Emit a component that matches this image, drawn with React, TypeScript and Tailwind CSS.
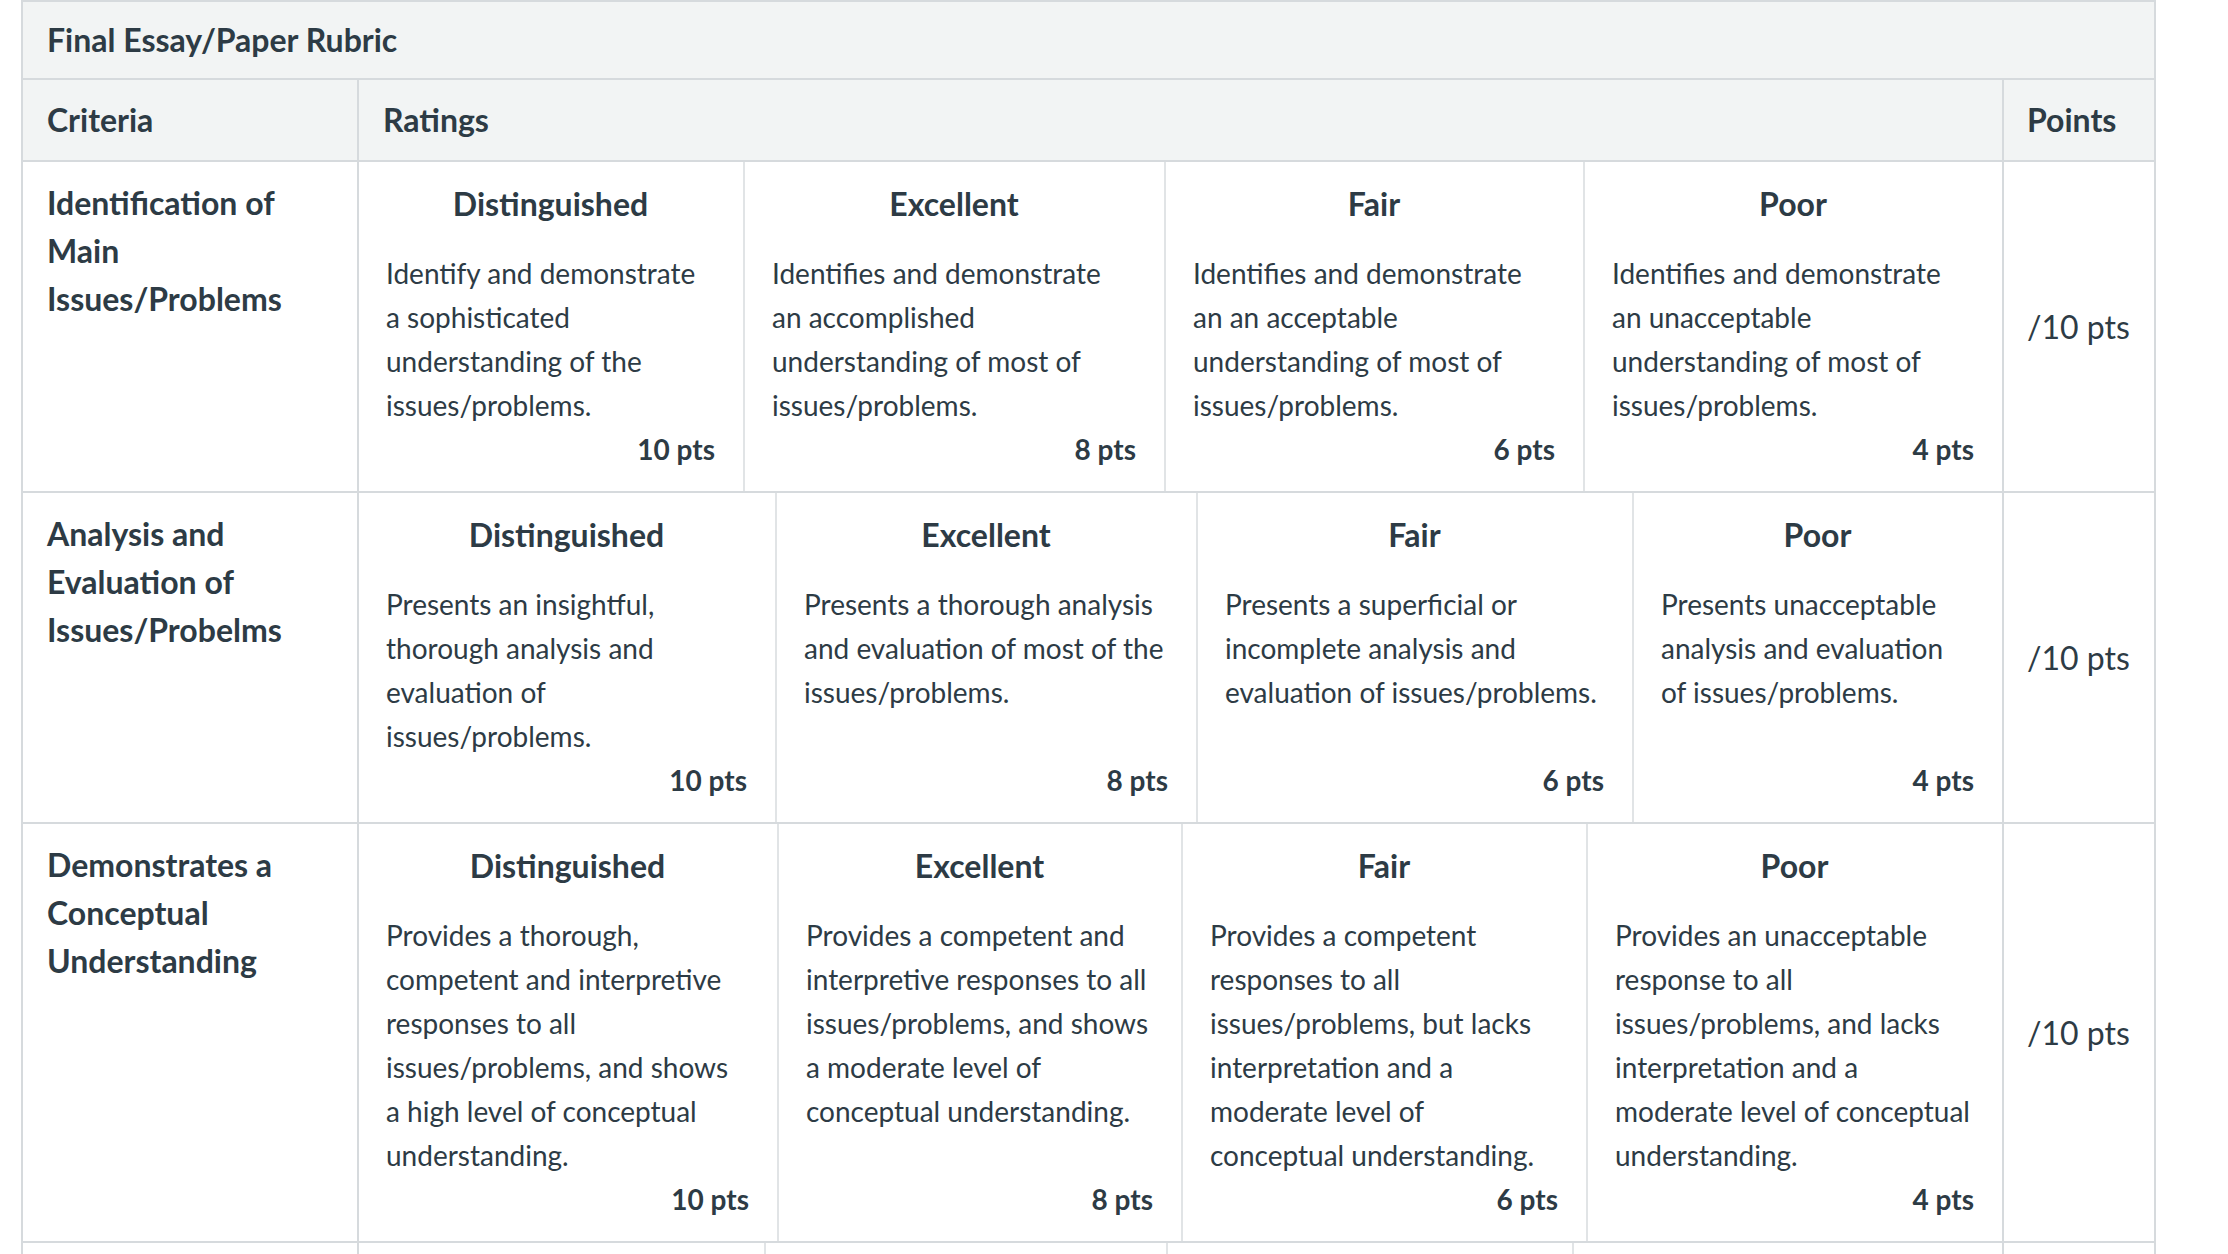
type Rating = {
  title: string;
  lines: string[];
  pts: number;
  width: string;
};

type Criterion = {
  name: string[];
  ratings: Rating[];
};

const criteria: Criterion[] = [
  {
    name: ["Identification of", "Main", "Issues/Problems"],
    ratings: [
      {
        title: "Distinguished",
        lines: ["Identify and demonstrate", "a sophisticated", "understanding of the", "issues/problems."],
        pts: 10,
        width: "w-[386px]",
      },
      {
        title: "Excellent",
        lines: ["Identifies and demonstrate", "an accomplished", "understanding of most of", "issues/problems."],
        pts: 8,
        width: "w-[421px]",
      },
      {
        title: "Fair",
        lines: ["Identifies and demonstrate", "an an acceptable", "understanding of most of", "issues/problems."],
        pts: 6,
        width: "w-[419px]",
      },
      {
        title: "Poor",
        lines: ["Identifies and demonstrate", "an unacceptable", "understanding of most of", "issues/problems."],
        pts: 4,
        width: "flex-1",
      },
    ],
  },
  {
    name: ["Analysis and", "Evaluation of", "Issues/Probelms"],
    ratings: [
      {
        title: "Distinguished",
        lines: ["Presents an insightful,", "thorough analysis and", "evaluation of", "issues/problems."],
        pts: 10,
        width: "w-[418px]",
      },
      {
        title: "Excellent",
        lines: ["Presents a thorough analysis", "and evaluation of most of the", "issues/problems."],
        pts: 8,
        width: "w-[421px]",
      },
      {
        title: "Fair",
        lines: ["Presents a superficial or", "incomplete analysis and", "evaluation of issues/problems."],
        pts: 6,
        width: "w-[436px]",
      },
      {
        title: "Poor",
        lines: ["Presents unacceptable", "analysis and evaluation", "of issues/problems."],
        pts: 4,
        width: "flex-1",
      },
    ],
  },
  {
    name: ["Demonstrates a", "Conceptual", "Understanding"],
    ratings: [
      {
        title: "Distinguished",
        lines: [
          "Provides a thorough,",
          "competent and interpretive",
          "responses to all",
          "issues/problems, and shows",
          "a high level of conceptual",
          "understanding.",
        ],
        pts: 10,
        width: "w-[420px]",
      },
      {
        title: "Excellent",
        lines: [
          "Provides a competent and",
          "interpretive responses to all",
          "issues/problems, and shows",
          "a moderate level of",
          "conceptual understanding.",
        ],
        pts: 8,
        width: "w-[404px]",
      },
      {
        title: "Fair",
        lines: [
          "Provides a competent",
          "responses to all",
          "issues/problems, but lacks",
          "interpretation and a",
          "moderate level of",
          "conceptual understanding.",
        ],
        pts: 6,
        width: "w-[405px]",
      },
      {
        title: "Poor",
        lines: [
          "Provides an unacceptable",
          "response to all",
          "issues/problems, and lacks",
          "interpretation and a",
          "moderate level of conceptual",
          "understanding.",
        ],
        pts: 4,
        width: "flex-1",
      },
    ],
  },
];

const RatingCell = ({ rating, last }: { rating: Rating; last: boolean }) => (
  <div
    className={`${rating.width} min-w-0 flex flex-col pl-[27px] pr-[28px] pt-[18px] pb-[20px] ${
      last ? "" : "border-r-2 border-[#e1e4e6]"
    }`}
  >
    <div className="text-center text-[32px] leading-[48px] font-bold mb-[23px]">{rating.title}</div>
    <div className="text-[28px] leading-[44px] whitespace-nowrap">
      {rating.lines.map((line, i) => (
        <div key={i}>{line}</div>
      ))}
    </div>
    <div className="mt-auto -mt-[1px] text-right text-[28px] leading-[44px] font-bold">{rating.pts} pts</div>
  </div>
);

const App = () => {
  return (
    <div className="min-h-screen bg-white pl-[21px] font-['Lato','Noto_Sans',sans-serif] text-[#2d3b45]">
      <div className="w-[2135px] border-2 border-b-0 border-[#d6dadd]">
        {/* title */}
        <div className="h-[78px] flex items-center px-[24px] bg-[#f2f4f4] border-b-2 border-[#d6dadd]">
          <h2 className="text-[32px] leading-[48px] font-bold">Final Essay/Paper Rubric</h2>
        </div>

        {/* column headings */}
        <div className="flex h-[82px] bg-[#f2f4f4] border-b-2 border-[#d6dadd] text-[32px] leading-[48px] font-bold">
          <div className="w-[336px] flex items-center px-[24px] border-r-2 border-[#d6dadd]">Criteria</div>
          <div className="flex-1 flex items-center px-[24px] border-r-2 border-[#d6dadd]">Ratings</div>
          <div className="w-[150px] flex items-center px-[23px]">Points</div>
        </div>

        {criteria.map((c, idx) => (
          <div key={idx} className="flex border-b-2 border-[#d6dadd]">
            <div className="w-[336px] shrink-0 px-[24px] pt-[17px] border-r-2 border-[#d6dadd] text-[32px] leading-[48px] font-bold">
              {c.name.map((n, i) => (
                <div key={i}>{n}</div>
              ))}
            </div>
            <div className="flex-1 min-w-0 flex border-r-2 border-[#d6dadd]">
              {c.ratings.map((r, i) => (
                <RatingCell key={i} rating={r} last={i === c.ratings.length - 1} />
              ))}
            </div>
            <div className="w-[150px] shrink-0 flex items-center px-[23px] text-[32px] leading-[48px]">
              /10 pts
            </div>
          </div>
        ))}

        {/* next criterion, cut off by the window */}
        <div className="flex h-[200px]">
          <div className="w-[336px] border-r-2 border-[#d6dadd]" />
          <div className="flex-1 flex border-r-2 border-[#d6dadd]">
            <div className="w-[407px] border-r-2 border-[#e1e4e6]" />
            <div className="w-[402px] border-r-2 border-[#e1e4e6]" />
            <div className="w-[406px] border-r-2 border-[#e1e4e6]" />
            <div className="flex-1" />
          </div>
          <div className="w-[150px]" />
        </div>
      </div>
    </div>
  );
};

export default App;
